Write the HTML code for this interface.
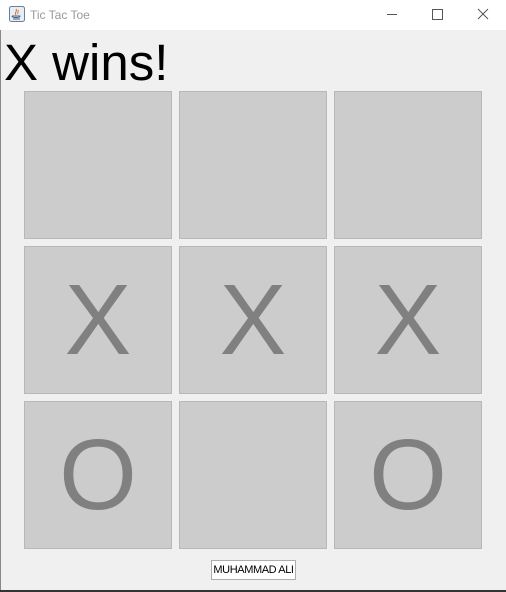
<!DOCTYPE html><html><head><style>
body{margin:0;width:506px;height:592px;overflow:hidden;background:#f0f0f0;position:relative;font-family:"Liberation Sans",sans-serif}
.tb{position:absolute;left:0;top:0;width:506px;height:30px;background:#fff}
.t{position:absolute;left:30px;top:8px;font-size:12px;color:#999}
.c{position:absolute;width:146px;height:146px;background:#cccccc;border:1px solid #b8b8b8;color:#808080;font-size:100px;text-align:center;line-height:146px}
.c span{position:relative;top:0px}
</style></head><body>
<div class="tb">
<svg style="position:absolute;left:9px;top:6px" width="16" height="16"><rect x="0.5" y="0.5" width="15" height="15" rx="2" fill="#e8eef6" stroke="#6a7d99"/><path d="M7 3c2 2-2 3 0 6M9 4c1 1-1 2 0 4" stroke="#e0702a" fill="none"/><path d="M3 10h8c0 2-8 2-8 0M4 13h7" stroke="#46607f" fill="none"/></svg>
<div class="t">Tic Tac Toe</div>
<svg style="position:absolute;left:380px;top:0" width="126" height="30"><path d="M7 14.5h10" stroke="#555"/><rect x="52.5" y="9.5" width="10" height="10" fill="none" stroke="#555"/><path d="M98 9l10 10M108 9l-10 10" stroke="#555"/></svg>
</div>
<div style="position:absolute;left:0;top:30px;width:1px;height:562px;background:#888"></div>
<div style="position:absolute;left:0;top:590px;width:506px;height:2px;background:#333"></div>
<div style="position:absolute;left:4px;top:33px;font-size:51px;color:#000">X wins!</div>
<div class="c" style="left:24px;top:91px"></div>
<div class="c" style="left:179px;top:91px"></div>
<div class="c" style="left:334px;top:91px"></div>
<div class="c" style="left:24px;top:246px"><span>X</span></div>
<div class="c" style="left:179px;top:246px"><span>X</span></div>
<div class="c" style="left:334px;top:246px"><span>X</span></div>
<div class="c" style="left:24px;top:401px"><span>O</span></div>
<div class="c" style="left:179px;top:401px"></div>
<div class="c" style="left:334px;top:401px"><span>O</span></div>
<div style="position:absolute;left:211px;top:560px;width:83px;height:18px;background:#fff;border:1px solid #adadad;font-size:11px;line-height:18px;text-align:center;color:#000;white-space:nowrap;letter-spacing:-0.4px;overflow:hidden">MUHAMMAD ALI</div>
</body></html>
